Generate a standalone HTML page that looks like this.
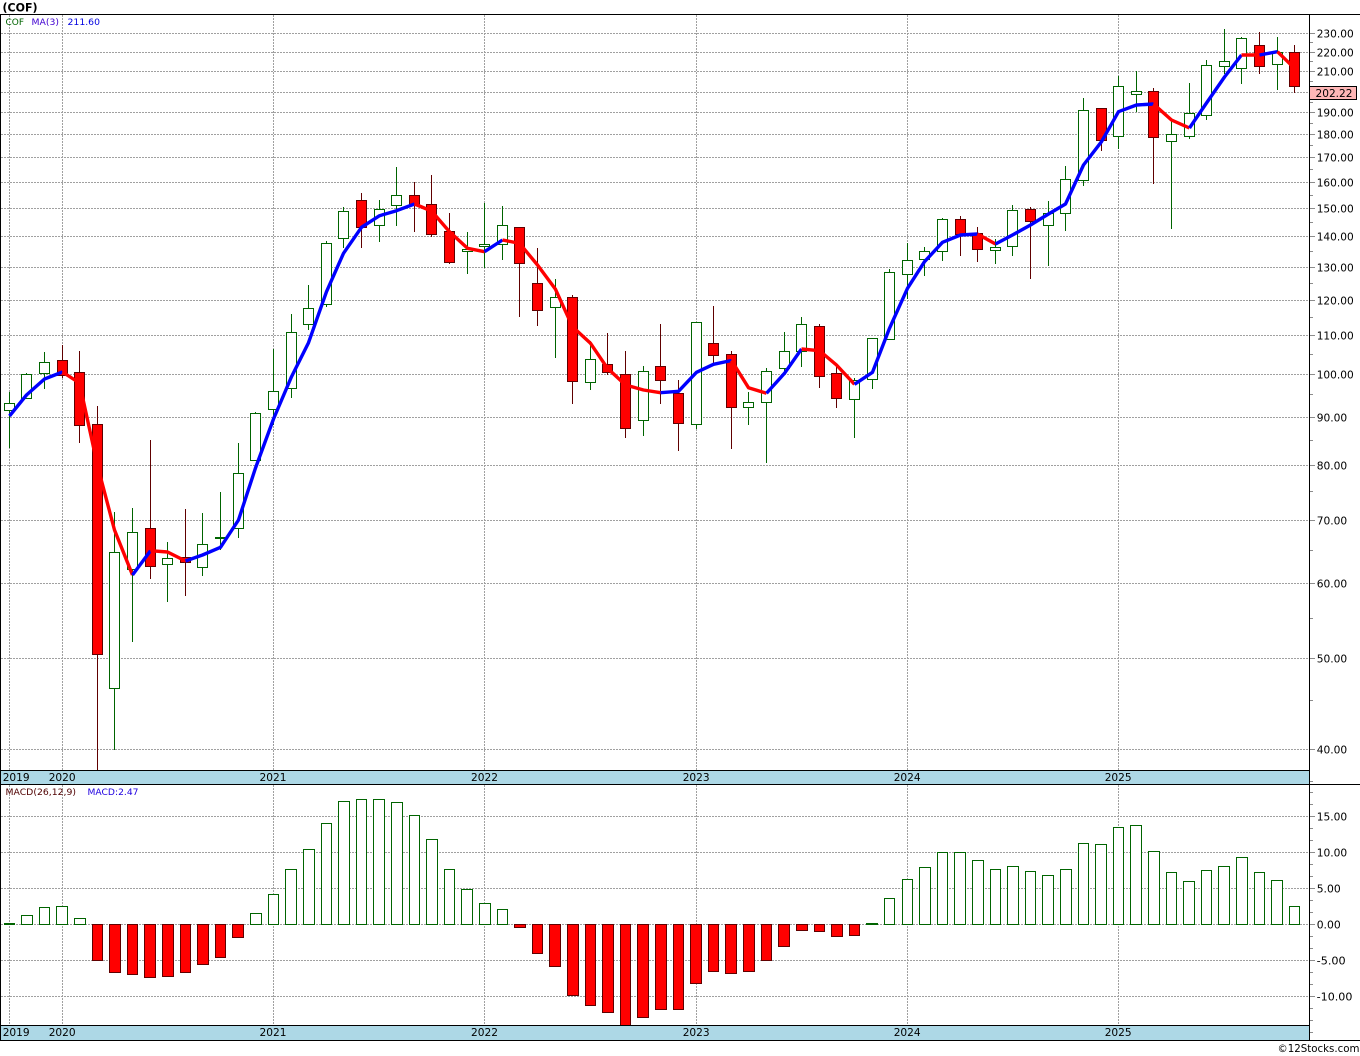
<!DOCTYPE html>
<html><head><meta charset="utf-8"><title>(COF)</title>
<style>
html,body{margin:0;padding:0;background:#fff;width:1360px;height:1056px;overflow:hidden}
svg{display:block;position:absolute;left:0;top:0}
text{font-family:"DejaVu Sans","Liberation Sans",sans-serif;font-size:11px;fill:#000}
.c{shape-rendering:crispEdges}
.g{fill:none;stroke:#a0a0a0;stroke-width:1;stroke-dasharray:2 1;shape-rendering:crispEdges}
.t{fill:none;stroke:#8c8c8c;stroke-width:1;shape-rendering:crispEdges}
.gw{fill:none;stroke:#006400;stroke-width:1;shape-rendering:crispEdges}
.rw{fill:none;stroke:#600000;stroke-width:1;shape-rendering:crispEdges}
.gb{fill:#fff;stroke:#006400;stroke-width:1;shape-rendering:crispEdges}
.rb{fill:#f00;stroke:#600000;stroke-width:1;shape-rendering:crispEdges}
.mb{fill:none;stroke:#0000ff;stroke-width:3.4;stroke-linejoin:round;stroke-linecap:butt}
.mr{fill:none;stroke:#ff0000;stroke-width:3.4;stroke-linejoin:round;stroke-linecap:butt}
</style></head><body>
<svg width="1360" height="1056" viewBox="0 0 1360 1056" xmlns="http://www.w3.org/2000/svg">
<rect width="1360" height="1056" fill="#fff"/>

<path class="g" d="M1 33.5H1309M1 52.5H1309M1 71.5H1309M1 92.5H1309M1 112.5H1309M1 134.5H1309M1 157.5H1309M1 182.5H1309M1 208.5H1309M1 236.5H1309M1 267.5H1309M1 300.5H1309M1 335.5H1309M1 374.5H1309M1 417.5H1309M1 465.5H1309M1 520.5H1309M1 583.5H1309M1 658.5H1309M1 749.5H1309"/>
<path class="g" d="M1 816.5H1309M1 852.5H1309M1 888.5H1309M1 924.5H1309M1 960.5H1309M1 996.5H1309"/>
<path class="g" d="M9.5 15V770M62.5 15V770M273.5 15V770M484.5 15V770M696.5 15V770M907.5 15V770M1118.5 15V770"/>
<path class="g" d="M9.5 785V1025M62.5 785V1025M273.5 785V1025M484.5 785V1025M696.5 785V1025M907.5 785V1025M1118.5 785V1025"/>

<path class="gw" d="M9.5 392V448M26.5 373V399M44.5 352V389M114.5 512V750M132.5 508V642M167.5 542V602M202.5 513V576M220.5 492V550M238.5 443V538M255.5 412V461M273.5 349V425M291.5 314V398M308.5 285V330M326.5 241V307M343.5 207V248M379.5 200V242M396.5 167V226M467.5 232V274M484.5 203V268M502.5 206V260M555.5 279V358M590.5 341V390M643.5 366V436M696.5 322V429M748.5 392V425M766.5 368V463M784.5 332V373M801.5 317V367M854.5 378V438M872.5 338V389M889.5 269V340M907.5 243V299M924.5 247V276M942.5 218V261M995.5 239V264M1012.5 205V256M1048.5 201V266M1065.5 166V231M1083.5 98V186M1118.5 76V149M1136.5 71V112M1171.5 120V229M1189.5 83V139M1206.5 60V120M1224.5 29V74M1241.5 37V84M1277.5 37V90"/>
<path class="rw" d="M62.5 345V378M79.5 351V443M97.5 406V770M150.5 440V579M185.5 509V596M361.5 193V248M414.5 182V232M431.5 175V237M449.5 213V264M519.5 227V317M537.5 248V326M572.5 295V404M607.5 333V375M625.5 351V438M660.5 324V404M678.5 380V451M713.5 306V363M731.5 351V449M819.5 324V388M836.5 367V408M960.5 216V256M977.5 227V262M1030.5 207V279M1101.5 108V151M1153.5 88V184M1259.5 32V74M1294.5 45V93"/>

<path class="gb" d="M4.5 403.5h10V410.5h-10zM21.5 374.5h10V398.5h-10zM39.5 362.5h10V373.5h-10zM109.5 552.5h10V688.5h-10zM127.5 532.5h10V569.5h-10zM162.5 558.5h10V564.5h-10zM197.5 544.5h10V567.5h-10zM215.5 537.5h10V538.5h-10zM233.5 473.5h10V528.5h-10zM250.5 413.5h10V460.5h-10zM268.5 391.5h10V409.5h-10zM286.5 332.5h10V388.5h-10zM303.5 308.5h10V324.5h-10zM321.5 243.5h10V304.5h-10zM338.5 211.5h10V238.5h-10zM374.5 209.5h10V225.5h-10zM391.5 195.5h10V205.5h-10zM462.5 249.5h10V251.5h-10zM479.5 244.5h10V246.5h-10zM497.5 225.5h10V244.5h-10zM550.5 297.5h10V307.5h-10zM585.5 359.5h10V382.5h-10zM638.5 371.5h10V420.5h-10zM691.5 322.5h10V424.5h-10zM743.5 402.5h10V407.5h-10zM761.5 371.5h10V402.5h-10zM779.5 351.5h10V368.5h-10zM796.5 324.5h10V351.5h-10zM849.5 380.5h10V399.5h-10zM867.5 338.5h10V379.5h-10zM884.5 272.5h10V339.5h-10zM902.5 260.5h10V274.5h-10zM919.5 251.5h10V259.5h-10zM937.5 219.5h10V251.5h-10zM990.5 247.5h10V250.5h-10zM1007.5 210.5h10V246.5h-10zM1043.5 213.5h10V225.5h-10zM1060.5 179.5h10V213.5h-10zM1078.5 110.5h10V180.5h-10zM1113.5 86.5h10V136.5h-10zM1131.5 91.5h10V94.5h-10zM1166.5 134.5h10V141.5h-10zM1184.5 113.5h10V136.5h-10zM1201.5 65.5h10V115.5h-10zM1219.5 61.5h10V66.5h-10zM1236.5 38.5h10V68.5h-10zM1272.5 52.5h10V64.5h-10z"/>
<path class="rb" d="M57.5 360.5h10V375.5h-10zM74.5 372.5h10V425.5h-10zM92.5 424.5h10V654.5h-10zM145.5 528.5h10V566.5h-10zM180.5 557.5h10V562.5h-10zM356.5 200.5h10V227.5h-10zM409.5 195.5h10V205.5h-10zM426.5 204.5h10V234.5h-10zM444.5 231.5h10V262.5h-10zM514.5 227.5h10V263.5h-10zM532.5 283.5h10V310.5h-10zM567.5 297.5h10V381.5h-10zM602.5 364.5h10V372.5h-10zM620.5 374.5h10V428.5h-10zM655.5 366.5h10V380.5h-10zM673.5 393.5h10V423.5h-10zM708.5 343.5h10V355.5h-10zM726.5 354.5h10V407.5h-10zM814.5 326.5h10V376.5h-10zM831.5 373.5h10V398.5h-10zM955.5 219.5h10V234.5h-10zM972.5 233.5h10V249.5h-10zM1025.5 209.5h10V221.5h-10zM1096.5 108.5h10V140.5h-10zM1148.5 91.5h10V137.5h-10zM1254.5 45.5h10V66.5h-10zM1289.5 52.5h10V86.5h-10z"/>

<polyline class="mb" points="9.5,416 26.5,395 44.5,379 62.5,372"/>
<polyline class="mr" points="62.5,372 79.5,383 97.5,465.7 114.5,530 132.5,575"/>
<polyline class="mb" points="132.5,575 150.5,550.7"/>
<polyline class="mr" points="150.5,550.7 167.5,552 185.5,561"/>
<polyline class="mb" points="185.5,561 202.5,555 220.5,547.3 238.5,520 255.5,468 273.5,419 291.5,376.7 308.5,342.7 326.5,291.7 343.5,253.3 361.5,227.3 379.5,215.7 396.5,210.7 414.5,204"/>
<polyline class="mr" points="414.5,204 431.5,211 449.5,231.7 467.5,248.3 484.5,251.7"/>
<polyline class="mb" points="484.5,251.7 502.5,240"/>
<polyline class="mr" points="502.5,240 519.5,243.3 537.5,265 555.5,289.3 572.5,326.7 590.5,343.3 607.5,368.3 625.5,385 643.5,390 660.5,392.7"/>
<polyline class="mb" points="660.5,392.7 678.5,391.3 696.5,372.3 713.5,364.3 731.5,360.5"/>
<polyline class="mr" points="731.5,360.5 748.5,387.7 766.5,393.3"/>
<polyline class="mb" points="766.5,393.3 784.5,373.3 801.5,349"/>
<polyline class="mr" points="801.5,349 819.5,350.7 836.5,365 854.5,384.3"/>
<polyline class="mb" points="854.5,384.3 872.5,372.3 889.5,328.3 907.5,288.3 924.5,261.7 942.5,242.3 960.5,235 977.5,234"/>
<polyline class="mr" points="977.5,234 995.5,244"/>
<polyline class="mb" points="995.5,244 1012.5,235 1030.5,225 1048.5,214 1065.5,204 1083.5,165 1101.5,141.7 1118.5,111.7 1136.5,105 1153.5,104"/>
<polyline class="mr" points="1153.5,104 1171.5,120 1189.5,128"/>
<polyline class="mb" points="1189.5,128 1206.5,103 1224.5,77 1241.5,55"/>
<polyline class="mr" points="1241.5,55 1259.5,55"/>
<polyline class="mb" points="1259.5,55 1277.5,51.7"/>
<polyline class="mr" points="1277.5,51.7 1294.5,68.3"/>

<path class="gb" d="M21.5 915.5H32.5V924.5H21.5zM39.5 907.5H49.5V924.5H39.5zM56.5 906.5H67.5V924.5H56.5zM74.5 918.5H85.5V924.5H74.5zM250.5 913.5H261.5V924.5H250.5zM268.5 894.5H278.5V924.5H268.5zM285.5 869.5H296.5V924.5H285.5zM303.5 849.5H314.5V924.5H303.5zM321.5 823.5H331.5V924.5H321.5zM338.5 801.5H349.5V924.5H338.5zM356.5 799.5H366.5V924.5H356.5zM373.5 799.5H384.5V924.5H373.5zM391.5 802.5H402.5V924.5H391.5zM409.5 815.5H419.5V924.5H409.5zM426.5 839.5H437.5V924.5H426.5zM444.5 869.5H454.5V924.5H444.5zM461.5 889.5H472.5V924.5H461.5zM479.5 903.5H490.5V924.5H479.5zM497.5 909.5H507.5V924.5H497.5zM884.5 898.5H894.5V924.5H884.5zM902.5 879.5H912.5V924.5H902.5zM919.5 867.5H930.5V924.5H919.5zM937.5 852.5H947.5V924.5H937.5zM954.5 852.5H965.5V924.5H954.5zM972.5 860.5H983.5V924.5H972.5zM990.5 869.5H1000.5V924.5H990.5zM1007.5 866.5H1018.5V924.5H1007.5zM1025.5 871.5H1035.5V924.5H1025.5zM1042.5 875.5H1053.5V924.5H1042.5zM1060.5 869.5H1071.5V924.5H1060.5zM1078.5 843.5H1088.5V924.5H1078.5zM1095.5 844.5H1106.5V924.5H1095.5zM1113.5 827.5H1123.5V924.5H1113.5zM1130.5 825.5H1141.5V924.5H1130.5zM1148.5 851.5H1159.5V924.5H1148.5zM1166.5 872.5H1176.5V924.5H1166.5zM1183.5 881.5H1194.5V924.5H1183.5zM1201.5 870.5H1211.5V924.5H1201.5zM1218.5 866.5H1229.5V924.5H1218.5zM1236.5 857.5H1247.5V924.5H1236.5zM1254.5 872.5H1264.5V924.5H1254.5zM1271.5 880.5H1282.5V924.5H1271.5zM1289.5 906.5H1299.5V924.5H1289.5z"/>
<path class="gb" style="fill:#006400" d="M4.5 923.5H14.5V924.5H4.5zM866.5 923.5H877.5V924.5H866.5z"/>
<path class="rb" d="M92.5 924.5H102.5V960.5H92.5zM109.5 924.5H120.5V972.5H109.5zM127.5 924.5H137.5V974.5H127.5zM144.5 924.5H155.5V977.5H144.5zM162.5 924.5H173.5V976.5H162.5zM180.5 924.5H190.5V972.5H180.5zM197.5 924.5H208.5V964.5H197.5zM215.5 924.5H225.5V957.5H215.5zM232.5 924.5H243.5V937.5H232.5zM514.5 924.5H525.5V927.5H514.5zM532.5 924.5H542.5V953.5H532.5zM549.5 924.5H560.5V966.5H549.5zM567.5 924.5H578.5V995.5H567.5zM585.5 924.5H595.5V1005.5H585.5zM602.5 924.5H613.5V1012.5H602.5zM620.5 924.5H630.5V1025.5H620.5zM637.5 924.5H648.5V1017.5H637.5zM655.5 924.5H666.5V1009.5H655.5zM673.5 924.5H683.5V1009.5H673.5zM690.5 924.5H701.5V983.5H690.5zM708.5 924.5H718.5V971.5H708.5zM725.5 924.5H736.5V973.5H725.5zM743.5 924.5H754.5V971.5H743.5zM761.5 924.5H771.5V960.5H761.5zM778.5 924.5H789.5V946.5H778.5zM796.5 924.5H807.5V930.5H796.5zM814.5 924.5H824.5V931.5H814.5zM831.5 924.5H842.5V936.5H831.5zM849.5 924.5H859.5V935.5H849.5z"/>

<rect class="c" x="1" y="771" width="1308" height="13" fill="#add8e6"/>
<rect class="c" x="1" y="1026" width="1308" height="14" fill="#add8e6"/>

<path class="t" d="M1310 33.5h5M1310 52.5h5M1310 71.5h5M1310 92.5h5M1310 112.5h5M1310 134.5h5M1310 157.5h5M1310 182.5h5M1310 208.5h5M1310 236.5h5M1310 267.5h5M1310 300.5h5M1310 335.5h5M1310 374.5h5M1310 417.5h5M1310 465.5h5M1310 520.5h5M1310 583.5h5M1310 658.5h5M1310 749.5h5M1310 816.5h5M1310 852.5h5M1310 888.5h5M1310 924.5h5M1310 960.5h5M1310 996.5h5"/>
<path class="t" d="M1310 42.5h3M1310 61.5h3M1310 81.5h3M1310 102.5h3M1310 123.5h3M1310 145.5h3M1310 169.5h3M1310 195.5h3M1310 222.5h3M1310 251.5h3M1310 283.5h3M1310 317.5h3M1310 354.5h3M1310 394.5h3M1310 440.5h3M1310 491.5h3M1310 550.5h3M1310 618.5h3M1310 700.5h3M1310 781.5h3M1310 792.5h3M1310 804.5h3M1310 828.5h3M1310 840.5h3M1310 864.5h3M1310 876.5h3M1310 900.5h3M1310 912.5h3M1310 936.5h3M1310 948.5h3M1310 972.5h3M1310 984.5h3M1310 1008.5h3M1310 1020.5h3M1310 1032.5h3"/>

<path class="c" fill="none" stroke="#000" stroke-width="1" d="M0 14.5H1360M0 770.5H1309M0 784.5H1360M0 1025.5H1309M0 1040.5H1360M1309.5 14V1041M0.5 14V1041"/>

<rect class="c" x="1309.5" y="86.5" width="47" height="13" fill="#ffb6b6" stroke="#000"/>
<text x="1315.5" y="97" textLength="37" lengthAdjust="spacingAndGlyphs">202.22</text>

<text x="1316.7" y="37.3" textLength="37" lengthAdjust="spacingAndGlyphs">230.00</text>
<text x="1316.7" y="56.3" textLength="37" lengthAdjust="spacingAndGlyphs">220.00</text>
<text x="1316.7" y="75.3" textLength="37" lengthAdjust="spacingAndGlyphs">210.00</text>
<text x="1316.7" y="116.3" textLength="37" lengthAdjust="spacingAndGlyphs">190.00</text>
<text x="1316.7" y="138.3" textLength="37" lengthAdjust="spacingAndGlyphs">180.00</text>
<text x="1316.7" y="161.3" textLength="37" lengthAdjust="spacingAndGlyphs">170.00</text>
<text x="1316.7" y="186.3" textLength="37" lengthAdjust="spacingAndGlyphs">160.00</text>
<text x="1316.7" y="212.3" textLength="37" lengthAdjust="spacingAndGlyphs">150.00</text>
<text x="1316.7" y="240.3" textLength="37" lengthAdjust="spacingAndGlyphs">140.00</text>
<text x="1316.7" y="271.3" textLength="37" lengthAdjust="spacingAndGlyphs">130.00</text>
<text x="1316.7" y="304.3" textLength="37" lengthAdjust="spacingAndGlyphs">120.00</text>
<text x="1316.7" y="339.3" textLength="37" lengthAdjust="spacingAndGlyphs">110.00</text>
<text x="1316.7" y="378.3" textLength="37" lengthAdjust="spacingAndGlyphs">100.00</text>
<text x="1316.7" y="421.3" textLength="30.5" lengthAdjust="spacingAndGlyphs">90.00</text>
<text x="1316.7" y="469.3" textLength="30.5" lengthAdjust="spacingAndGlyphs">80.00</text>
<text x="1316.7" y="524.3" textLength="30.5" lengthAdjust="spacingAndGlyphs">70.00</text>
<text x="1316.7" y="587.3" textLength="30.5" lengthAdjust="spacingAndGlyphs">60.00</text>
<text x="1316.7" y="662.3" textLength="30.5" lengthAdjust="spacingAndGlyphs">50.00</text>
<text x="1316.7" y="753.3" textLength="30.5" lengthAdjust="spacingAndGlyphs">40.00</text>

<text x="1316.7" y="820.3" textLength="30.5" lengthAdjust="spacingAndGlyphs">15.00</text>
<text x="1316.7" y="856.3" textLength="30.5" lengthAdjust="spacingAndGlyphs">10.00</text>
<text x="1316.7" y="892.3" textLength="24" lengthAdjust="spacingAndGlyphs">5.00</text>
<text x="1316.7" y="928.3" textLength="24" lengthAdjust="spacingAndGlyphs">0.00</text>
<text x="1316.7" y="964.3" textLength="29" lengthAdjust="spacingAndGlyphs">-5.00</text>
<text x="1316.7" y="1000.3" textLength="35.7" lengthAdjust="spacingAndGlyphs">-10.00</text>

<text x="2.7" y="781" textLength="27" lengthAdjust="spacingAndGlyphs">2019</text>
<text x="48.7" y="781" textLength="27" lengthAdjust="spacingAndGlyphs">2020</text>
<text x="259.5" y="781" textLength="27" lengthAdjust="spacingAndGlyphs">2021</text>
<text x="471" y="781" textLength="27" lengthAdjust="spacingAndGlyphs">2022</text>
<text x="682.7" y="781" textLength="27" lengthAdjust="spacingAndGlyphs">2023</text>
<text x="893.7" y="781" textLength="27" lengthAdjust="spacingAndGlyphs">2024</text>
<text x="1104.7" y="781" textLength="27" lengthAdjust="spacingAndGlyphs">2025</text>
<text x="2.7" y="1036" textLength="27" lengthAdjust="spacingAndGlyphs">2019</text>
<text x="48.7" y="1036" textLength="27" lengthAdjust="spacingAndGlyphs">2020</text>
<text x="259.5" y="1036" textLength="27" lengthAdjust="spacingAndGlyphs">2021</text>
<text x="471" y="1036" textLength="27" lengthAdjust="spacingAndGlyphs">2022</text>
<text x="682.7" y="1036" textLength="27" lengthAdjust="spacingAndGlyphs">2023</text>
<text x="893.7" y="1036" textLength="27" lengthAdjust="spacingAndGlyphs">2024</text>
<text x="1104.7" y="1036" textLength="27" lengthAdjust="spacingAndGlyphs">2025</text>

<text x="2.5" y="11.5" style="font-size:11.5px;font-weight:bold" textLength="35" lengthAdjust="spacingAndGlyphs">(COF)</text>
<text x="5.5" y="25" style="font-size:9px;fill:#006400" textLength="18.5" lengthAdjust="spacingAndGlyphs">COF</text>
<text x="31.5" y="25" style="font-size:9px;fill:#4000d0" textLength="27.5" lengthAdjust="spacingAndGlyphs">MA(3)</text>
<text x="67.5" y="25" style="font-size:9px;fill:#0000e0" textLength="32.5" lengthAdjust="spacingAndGlyphs">211.60</text>
<text x="5.5" y="795" style="font-size:9px;fill:#500000" textLength="70.5" lengthAdjust="spacingAndGlyphs">MACD(26,12,9)</text>
<text x="87.5" y="795" style="font-size:9px;fill:#2000e0" textLength="51" lengthAdjust="spacingAndGlyphs">MACD:2.47</text>

<text x="1277.5" y="1052" style="font-size:11px" textLength="82" lengthAdjust="spacingAndGlyphs">©12Stocks.com</text>
</svg>
</body></html>
